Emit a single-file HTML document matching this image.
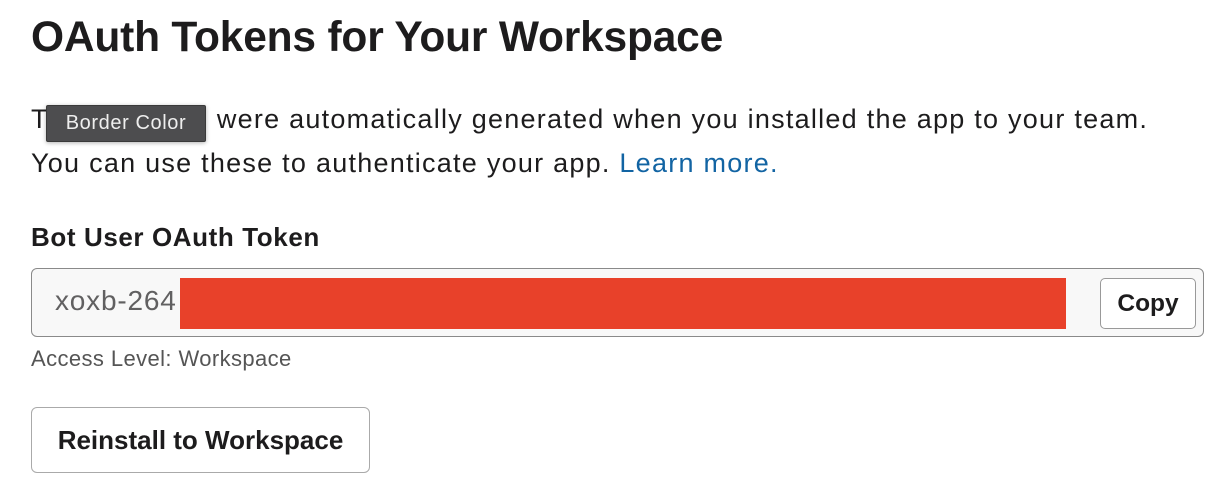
<!DOCTYPE html>
<html><head><style>
body{margin:0;width:1214px;height:486px;background:#fff;font-family:"Liberation Sans",sans-serif;color:#1d1c1d;position:relative;overflow:hidden}
.a{position:absolute;white-space:nowrap}
</style></head><body>
<div class="a" style="left:31px;top:14px;font-size:42.5px;font-weight:bold;letter-spacing:-0.2px">OAuth Tokens for Your Workspace</div>
<div class="a" style="left:31px;top:97px;font-size:27px;line-height:44px;letter-spacing:1.25px">These tokens were automatically generated when you installed the app to your team.<br>You can use these to authenticate your app. <span style="color:#1264a3">Learn more.</span></div>
<div class="a" style="left:46px;top:105px;width:158px;height:35px;background:#4d4d4f;border:1px solid #3a3a3a;border-radius:2px;color:#eee;font-size:20px;letter-spacing:0.6px;line-height:35px;text-align:center;box-shadow:0 1px 4px rgba(0,0,0,.3)">Border Color</div>
<div class="a" style="left:31px;top:222px;font-size:26px;font-weight:bold;letter-spacing:0.6px">Bot User OAuth Token</div>
<div class="a" style="left:31px;top:268px;width:1171px;height:67px;background:#f8f8f8;border:1px solid #8a8a8a;border-radius:6px"></div>
<div class="a" style="left:55px;top:285px;font-size:28px;letter-spacing:0.8px;color:#616061">xoxb-264</div>
<div class="a" style="left:180px;top:278px;width:886px;height:51px;background:#e8412a"></div>
<div class="a" style="left:1100px;top:278px;width:94px;height:49px;background:#fff;border:1px solid #999;border-radius:5px;font-size:24.5px;line-height:49px;text-align:center;font-weight:bold">Copy</div>
<div class="a" style="left:31px;top:346px;font-size:22px;letter-spacing:0.4px;color:#555">Access Level: Workspace</div>
<div class="a" style="left:31px;top:407px;width:337px;height:64px;background:#fff;border:1px solid #aaa;border-radius:6px;font-size:26px;font-weight:bold;line-height:64px;text-align:center">Reinstall to Workspace</div>
</body></html>
